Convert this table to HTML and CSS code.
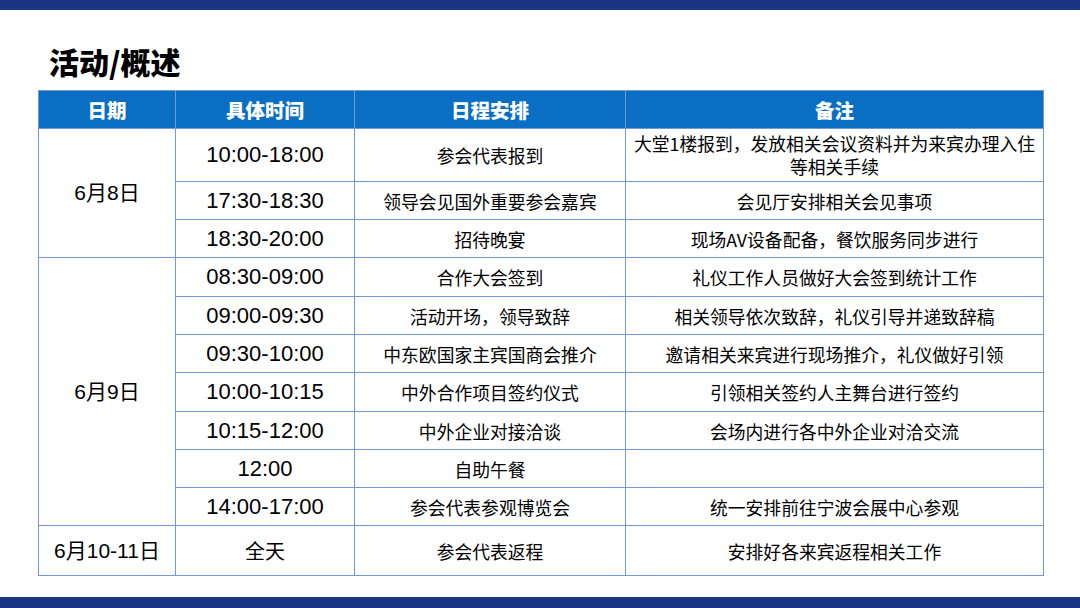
FILE: index.html
```html
<!DOCTYPE html>
<html lang="zh">
<head>
<meta charset="utf-8">
<link rel="stylesheet" href="styles.css">
</head>
<body>
<div class="page">
  <div class="bar"></div>
  <div class="content">
    <h1 class="title">活动/概述</h1>
    <table class="sched">
      <colgroup>
        <col class="c1"><col class="c2"><col class="c3"><col class="c4">
      </colgroup>
      <thead>
        <tr class="h"><th>日期</th><th>具体时间</th><th>日程安排</th><th>备注</th></tr>
      </thead>
      <tbody>
        <tr class="r53"><td class="date" rowspan="3">6月8日</td><td class="time">10:00-18:00</td><td>参会代表报到</td><td class="note2">大堂1楼报到，发放相关会议资料并为来宾办理入住<br>等相关手续</td></tr>
        <tr class="r38"><td class="time">17:30-18:30</td><td>领导会见国外重要参会嘉宾</td><td>会见厅安排相关会见事项</td></tr>
        <tr class="r38"><td class="time">18:30-20:00</td><td>招待晚宴</td><td>现场AV设备配备，餐饮服务同步进行</td></tr>
        <tr class="r39"><td class="date" rowspan="7">6月9日</td><td class="time">08:30-09:00</td><td>合作大会签到</td><td>礼仪工作人员做好大会签到统计工作</td></tr>
        <tr class="r38"><td class="time">09:00-09:30</td><td>活动开场，领导致辞</td><td>相关领导依次致辞，礼仪引导并递致辞稿</td></tr>
        <tr class="r38"><td class="time">09:30-10:00</td><td>中东欧国家主宾国商会推介</td><td>邀请相关来宾进行现场推介，礼仪做好引领</td></tr>
        <tr class="r39"><td class="time">10:00-10:15</td><td>中外合作项目签约仪式</td><td>引领相关签约人主舞台进行签约</td></tr>
        <tr class="r38"><td class="time">10:15-12:00</td><td>中外企业对接洽谈</td><td>会场内进行各中外企业对洽交流</td></tr>
        <tr class="r38"><td class="time">12:00</td><td>自助午餐</td><td></td></tr>
        <tr class="r38"><td class="time">14:00-17:00</td><td>参会代表参观博览会</td><td>统一安排前往宁波会展中心参观</td></tr>
        <tr class="r50"><td class="date">6月10-11日</td><td class="time cjk">全天</td><td>参会代表返程</td><td>安排好各来宾返程相关工作</td></tr>
      </tbody>
    </table>
  </div>
  <div class="bar bottom"></div>
</div>
</body>
</html>
```

FILE: styles.css
```css
html, body {
  margin: 0;
  padding: 0;
  background: #ffffff;
}
body {
  font-family: "Liberation Sans", "Noto Sans CJK SC", sans-serif;
  color: #000;
}
.page {
  width: 1080px;
  height: 608px;
  display: flex;
  flex-direction: column;
  overflow: hidden;
}
.bar {
  height: 10px;
  background: #1a3582;
  flex: none;
}
.bar.bottom {
  height: 11px;
}
.content {
  flex: 1;
  padding: 34px 0 0 38px;
}
.title {
  margin: 0 0 12px 0;
  padding-left: 11px;
  font-family: "Noto Sans CJK SC", sans-serif;
  font-size: 30px;
  line-height: 34px;
  font-weight: 900;
}
.sched {
  border-collapse: collapse;
  table-layout: fixed;
  width: 1006px;
}
.c1 { width: 137px; }
.c2 { width: 179px; }
.c3 { width: 271px; }
.c4 { width: 418px; }
.sched th,
.sched td {
  border: 1px solid #7398d3;
  text-align: center;
  vertical-align: middle;
  padding: 0 2px;
}
.sched th {
  background: #0a6fc2;
  color: #fff;
  font-family: "Noto Sans CJK SC", sans-serif;
  font-weight: 900;
  font-size: 19.5px;
  line-height: 24px;
}
.sched td {
  font-family: "Noto Sans CJK SC", sans-serif;
  font-size: 17.8px;
  line-height: 22px;
}
.sched td.time {
  font-family: "Liberation Sans", "Noto Sans CJK SC", sans-serif;
  font-size: 22px;
}
.sched td.time.cjk {
  font-family: "Noto Sans CJK SC", sans-serif;
  font-size: 20px;
}
.sched td.date {
  font-family: "Liberation Sans", "Noto Sans CJK SC", sans-serif;
  font-size: 21px;
}
.sched td.note2 {
  padding: 0;
  line-height: 23px;
}
.h { height: 38px; }
.r53 { height: 53px; }
.r38 { height: 38px; }
.r39 { height: 39px; }
.r50 { height: 50px; }
```
